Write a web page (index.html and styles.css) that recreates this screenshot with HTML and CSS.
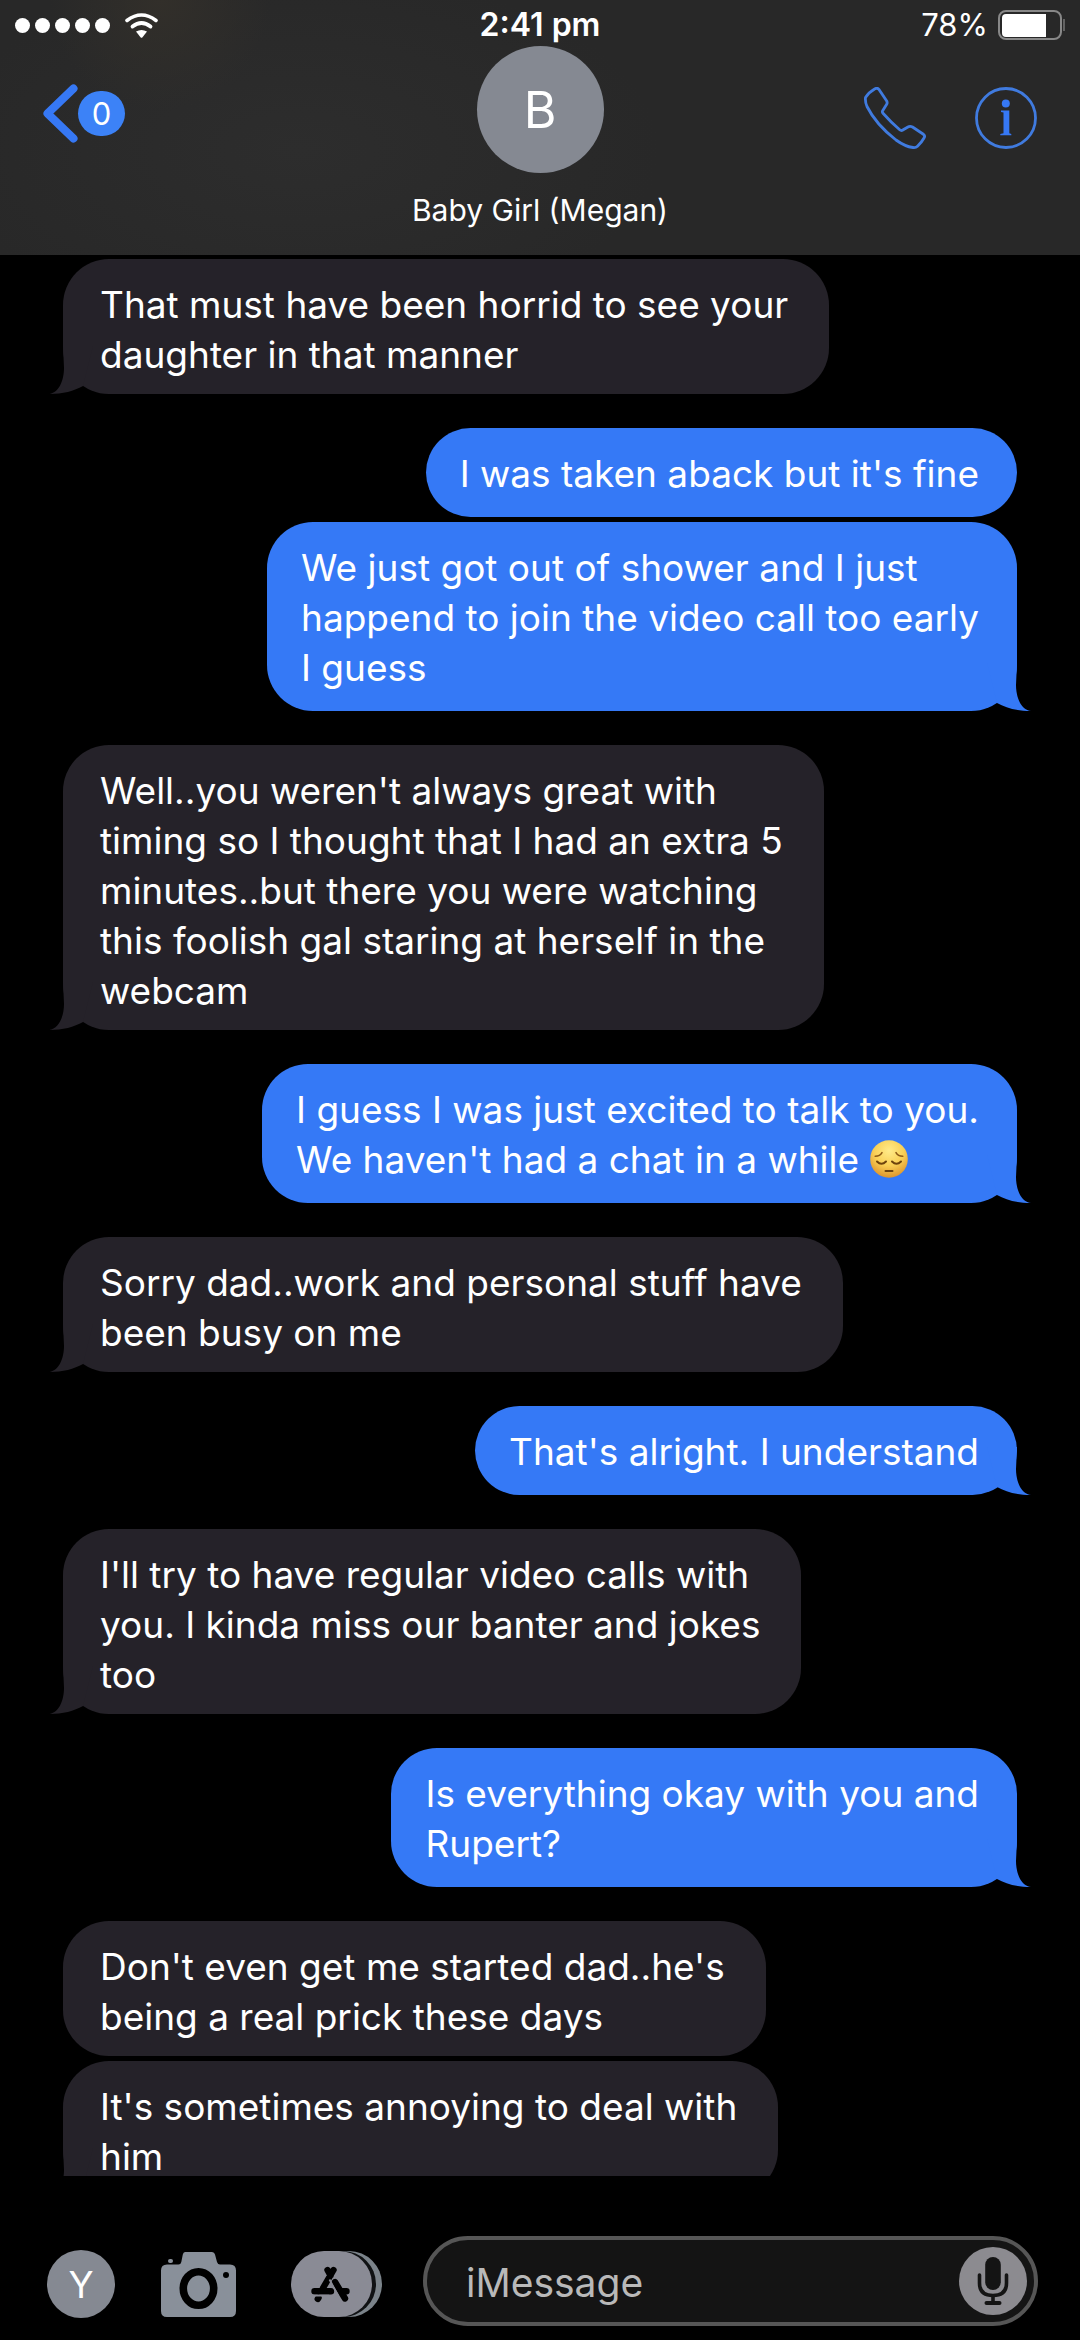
FILE: index.html
```html
<!DOCTYPE html>
<html lang="en">
<head>
<meta charset="utf-8">
<meta name="viewport" content="width=device-width, initial-scale=1">
<title>Baby Girl (Megan)</title>
<link rel="stylesheet" href="styles.css">
</head>
<body>
<header class="header">
  <div class="status">
    <div class="signal">
      <span class="dots"><i class="dot"></i><i class="dot"></i><i class="dot"></i><i class="dot"></i><i class="dot"></i></span>
      <svg class="wifi" viewBox="0 0 33 25" aria-hidden="true">
        <path d="M2 7.500Q16.500 -3.500 31 7.500" fill="none" stroke="#fff" stroke-width="3.600" stroke-linecap="round"/>
        <path d="M7.500 13.500Q16.500 6.500 25.500 13.500" fill="none" stroke="#fff" stroke-width="3.800" stroke-linecap="round"/>
        <path d="M11 18.500Q16.500 15.500 22 18.500L17.500 24.300Q16.500 25.300 15.500 24.300Z" fill="#fff"/>
      </svg>
    </div>
    <span class="time">2:41 pm</span>
    <div class="power">
      <span>78%</span>
      <svg class="battery" viewBox="0 0 67 30" aria-hidden="true">
        <rect x="1" y="1" width="62" height="28" rx="7" fill="none" stroke="#888" stroke-width="2"/>
        <path d="M8 4H48V27H8Q4 27 4 23V8Q4 4 8 4Z" fill="#fff"/>
        <path d="M66 9V21" stroke="#777" stroke-width="1.500"/>
      </svg>
    </div>
  </div>
  <nav class="nav">
    <button class="back" type="button" aria-label="Back">
      <svg class="chevron" viewBox="0 0 35 59" aria-hidden="true"><path d="M30.500 4.500 4.500 29.500 30.500 54.500" fill="none" stroke="#3678f5" stroke-width="8" stroke-linecap="round" stroke-linejoin="round"/></svg>
      <span class="badge">0</span>
    </button>
    <div class="contact">
      <span class="avatar avatar-large">B</span>
      <h1 class="name">Baby Girl (Megan)</h1>
    </div>
    <div class="actions">
      <button type="button" aria-label="Call">
        <svg class="action-icon" viewBox="0 0 62 62" aria-hidden="true"><path d="M1.500 10.500Q5 5 11 1.700Q13.700.500 15 2.500L22.700 14Q23.600 15.800 22.700 17.300L18.500 24Q18 25.200 19 26.300Q27 35.500 36 43Q37.300 44 38.800 43L43.500 40.200Q46 38.700 48.500 40L59 47Q61.500 48.700 60 51Q57.500 55.500 53.500 59.300Q51.800 60.900 49 60.500Q41 59.500 32 53Q12 37.500 3 19.500Q1 15 1.500 10.500Z" fill="none" stroke="#407bdf" stroke-width="2.800" stroke-linejoin="round"/></svg>
      </button>
      <button type="button" aria-label="Details">
        <svg class="action-icon" viewBox="0 0 62 62" aria-hidden="true"><circle cx="31" cy="31" r="29.500" fill="none" stroke="#407bdf" stroke-width="2.800"/><circle cx="30.800" cy="16.500" r="4" fill="#3678f5"/><path d="M26 23.500H34.300V46.200L36.300 47V48.300H25.300V47L28.500 46.200V25.500L26 25Z" fill="#3678f5"/></svg>
      </button>
    </div>
  </nav>
</header>

<main class="chat">
  <section class="group received">
    <p class="bubble tail">That must have been horrid to see your<br>daughter in that manner</p>
  </section>
  <section class="group sent">
    <p class="bubble">I was taken aback but it's fine</p>
    <p class="bubble tail">We just got out of shower and I just<br>happend to join the video call too early<br>I guess</p>
  </section>
  <section class="group received">
    <p class="bubble tail">Well..you weren't always great with<br>timing so I thought that I had an extra 5<br>minutes..but there you were watching<br>this foolish gal staring at herself in the<br>webcam</p>
  </section>
  <section class="group sent">
    <p class="bubble tail">I guess I was just excited to talk to you.<br>We haven't had a chat in a while <svg class="emoji" viewBox="0 0 38 38" role="img" aria-label="pensive face">
      <defs><radialGradient id="face" cx=".5" cy=".28" r=".72"><stop offset="0" stop-color="#ffeb8a"/><stop offset=".55" stop-color="#f9cf55"/><stop offset="1" stop-color="#dd942b"/></radialGradient></defs>
      <circle cx="19" cy="19" r="18.800" fill="url(#face)"/>
      <path d="M5.200 16.300Q10 16.300 12 12.700M32.800 16.300Q28 16.300 26 12.700" fill="none" stroke="#8d5a15" stroke-width="1.600" stroke-linecap="round"/>
      <path d="M7 21.500Q11.500 26 16 21.500M22 21.500Q26.500 26 31 21.500" fill="none" stroke="#6d430d" stroke-width="2" stroke-linecap="round"/>
      <path d="M15.500 31H22.500" stroke="#6d430d" stroke-width="2" stroke-linecap="round"/>
    </svg></p>
  </section>
  <section class="group received">
    <p class="bubble tail">Sorry dad..work and personal stuff have<br>been busy on me</p>
  </section>
  <section class="group sent">
    <p class="bubble tail">That's alright. I understand</p>
  </section>
  <section class="group received">
    <p class="bubble tail">I'll try to have regular video calls with<br>you. I kinda miss our banter and jokes<br>too</p>
  </section>
  <section class="group sent">
    <p class="bubble tail">Is everything okay with you and<br>Rupert?</p>
  </section>
  <section class="group received">
    <p class="bubble">Don't even get me started dad..he's<br>being a real prick these days</p>
    <p class="bubble tail">It's sometimes annoying to deal with<br>him</p>
  </section>
</main>

<footer class="composer">
  <div class="tools">
    <button class="avatar avatar-small" type="button" aria-label="Your profile, Y">Y</button>
    <button type="button" aria-label="Camera">
      <svg class="camera" viewBox="0 0 84 65" aria-hidden="true">
        <path d="M24 0H51Q53.500 0 54 2.500L56 10Q56.800 12.500 59 12.500H69Q75 12.500 75 18.500V59Q75 65 69 65H6Q0 65 0 59V18.500Q0 12.500 6 12.500H17.500Q19.700 12.500 20.300 10L21.800 2.500Q22.300 0 24 0Z" fill="#89909a"/>
        <rect x="7" y="7" width="5" height="4" rx="2" fill="#89909a"/>
        <ellipse cx="37.500" cy="36.500" rx="15.200" ry="16.800" fill="none" stroke="#000" stroke-width="7.600"/>
        <circle cx="65" cy="23" r="3" fill="#000"/>
      </svg>
    </button>
    <button type="button" aria-label="Apps">
      <svg class="apps" viewBox="0 0 91 66" aria-hidden="true">
        <rect x="20" width="71" height="66" rx="33" fill="#7b838a"/>
        <rect x="6" width="79" height="66" rx="33" fill="#101214"/>
        <rect width="81" height="66" rx="33" fill="#8a8b95"/>
        <g fill="none" stroke="#000" stroke-width="6.400" stroke-linecap="round">
          <path d="M42.500 19 32 37M36.500 19 39.500 24.500M44 31 54 47.500M23.500 40.300H40M51 40.300H55.500"/>
          <path d="M27.500 46.800 26.800 47.800"/>
        </g>
        <path d="M38.500 28.500 47 44.500M22 44.600H38" stroke="#8a8b95" stroke-width="1.800"/>
      </svg>
    </button>
  </div>
  <div class="field">
    <input class="message" type="text" placeholder="iMessage" aria-label="iMessage">
    <button class="mic" type="button" aria-label="Record audio">
      <svg class="mic-icon" viewBox="0 0 68 68" aria-hidden="true">
        <circle cx="34" cy="34" r="34" fill="#8c8b90"/>
        <rect x="26.200" y="10" width="15.600" height="33" rx="7.800" fill="#141414"/>
        <path d="M20.500 28V36Q20.500 48.500 34 48.500Q47.500 48.500 47.500 36V28" fill="none" stroke="#141414" stroke-width="3.600" stroke-linecap="round"/>
        <path d="M34 48V55" stroke="#141414" stroke-width="3.600"/>
        <rect x="25.500" y="54" width="17" height="4" rx="2" fill="#141414"/>
      </svg>
    </button>
  </div>
</footer>
</body>
</html>
```
FILE: styles.css
```css
* {
  box-sizing: border-box;
}

body {
  margin: 0;
  height: 100vh;
  display: flex;
  flex-direction: column;
  background: #000;
  color: #fff;
  font-family: Inter, "Liberation Sans", sans-serif;
}

button {
  display: block;
  margin: 0;
  padding: 0;
  border: 0;
  background: none;
  color: inherit;
  font: inherit;
}

svg {
  display: block;
}

/* Header */

.header {
  flex: none;
  padding-bottom: 27px;
  background:
    radial-gradient(circle at 160px 0, #322f2a, transparent 110px),
    radial-gradient(ellipse 360px 180px at 300px 150px, #2d2d2d, transparent),
    #282828;
}

.status {
  display: grid;
  grid-template-columns: 1fr auto 1fr;
  align-items: center;
  height: 46px;
  padding: 4px 15px 0;
  font-size: 32px;
  line-height: 38px;
}

.signal,
.dots,
.power {
  display: flex;
  align-items: center;
}

.signal {
  gap: 15px;
}

.dots {
  gap: 5px;
}

.dot {
  width: 15px;
  height: 15px;
  border-radius: 50%;
  background: #fff;
}

.wifi {
  width: 33px;
  height: 25px;
}

.time {
  font-weight: 600;
}

.power {
  justify-content: flex-end;
  gap: 10px;
  font-size: 31px;
}

.battery {
  width: 67px;
  height: 30px;
}

.nav {
  display: grid;
  grid-template-columns: 1fr auto 1fr;
  align-items: start;
  padding: 0 43px;
}

.back {
  display: flex;
  align-items: center;
  justify-self: start;
  padding-top: 38px;
}

.chevron {
  width: 35px;
  height: 59px;
}

.badge {
  width: 47px;
  height: 45px;
  border-radius: 23px;
  background: #3c82f7;
  font-size: 31px;
  line-height: 45px;
  text-align: center;
}

.contact {
  display: flex;
  flex-direction: column;
  align-items: center;
  gap: 19px;
}

.avatar {
  display: flex;
  align-items: center;
  justify-content: center;
  border-radius: 50%;
  background: #858992;
}

.avatar-large {
  width: 127px;
  height: 127px;
  font-size: 50px;
}

.avatar-small {
  width: 68px;
  height: 68px;
  font-size: 37px;
}

.name {
  margin: 0;
  font-size: 30px;
  font-weight: 400;
  line-height: 36px;
}

.actions {
  display: flex;
  justify-content: flex-end;
  gap: 49px;
  padding-top: 41px;
}

.action-icon {
  width: 62px;
  height: 62px;
}

/* Conversation */

.chat {
  flex: 1;
  min-height: 0;
  display: flex;
  flex-direction: column;
  gap: 34px;
  padding: 4px 63px 0;
  overflow-y: auto;
  scrollbar-width: none;
}

.group {
  flex: none;
  display: flex;
  flex-direction: column;
  gap: 5px;
}

.received {
  align-items: flex-start;
}

.sent {
  align-items: flex-end;
}

.bubble {
  position: relative;
  margin: 0;
  border-radius: 46px;
  font-size: 37px;
  line-height: 50px;
}

.received .bubble {
  padding: 21px 41px 14px 37px;
  background: #252229;
}

.sent .bubble {
  padding: 21px 38px 18px 34px;
  background: #3579f6;
}

.tail::after {
  content: "";
  position: absolute;
  bottom: 0;
  width: 50px;
  height: 48px;
  background: inherit;
}

.received .tail::after {
  left: -14px;
  clip-path: path("M14 0L15 22C15 34 10 47 0 48C14 48 25 45 34 40L44 0Z");
}

.sent .tail::after {
  right: -14px;
  clip-path: path("M36 0L35 22C35 34 40 47 50 48C36 48 25 45 16 40L6 0Z");
}

.emoji {
  display: inline-block;
  width: 38px;
  height: 38px;
  vertical-align: -5px;
}

/* Composer */

.composer {
  flex: none;
  display: flex;
  align-items: flex-end;
  gap: 41px;
  padding: 60px 42px 14px 47px;
}

.tools {
  display: flex;
  align-items: center;
  gap: 46px;
  padding-bottom: 8px;
}

.camera {
  width: 84px;
  height: 65px;
}

.apps {
  width: 91px;
  height: 66px;
}

.field {
  flex: 1;
  min-width: 0;
  display: flex;
  align-items: center;
  height: 90px;
  padding: 0 7px 0 39px;
  border: 4px solid #565656;
  border-radius: 45px;
  background: #141414;
}

.message {
  flex: 1;
  min-width: 0;
  padding: 4px 0 0;
  border: 0;
  outline: 0;
  background: none;
  color: #fff;
  font: inherit;
  font-size: 39px;
  line-height: 50px;
}

.message::placeholder {
  color: #b9b9b9;
  opacity: 1;
}

.mic-icon {
  width: 68px;
  height: 68px;
}
```
